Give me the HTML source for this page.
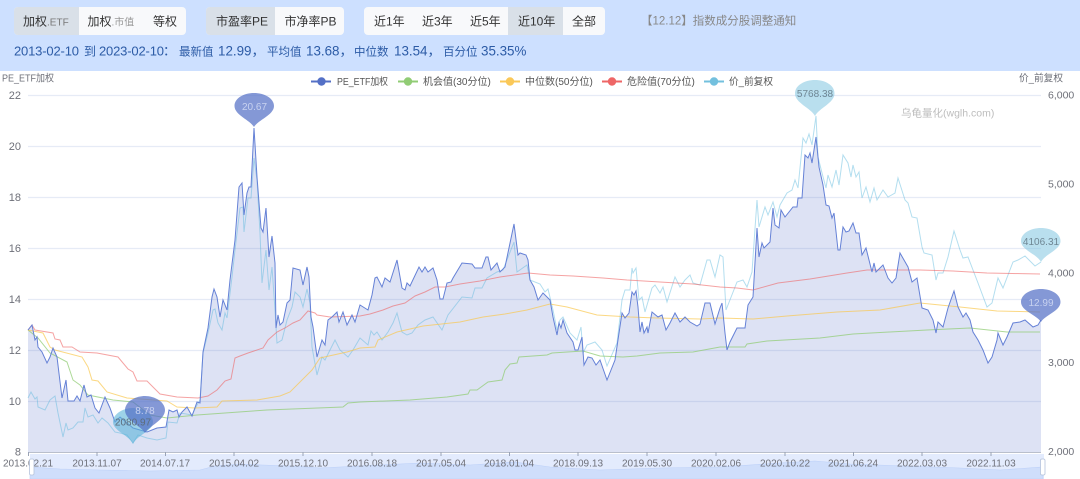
<!DOCTYPE html>
<html><head><meta charset="utf-8">
<style>
html,body{margin:0;padding:0;width:1080px;height:479px;overflow:hidden;background:#fff}
svg{display:block;filter:blur(.35px)}
text{font-family:"Liberation Sans","Noto Sans CJK SC",sans-serif}
</style></head><body>
<svg width="1080" height="479" viewBox="0 0 1080 479" xmlns="http://www.w3.org/2000/svg">
<rect x="0" y="0" width="1080" height="71" fill="#cde0ff"/>
<!-- button groups -->
<rect x="14" y="7" width="172" height="28" rx="4" fill="#f8f9fb"/>
<path d="M18 7H79V35H18a4 4 0 0 1-4-4V11a4 4 0 0 1 4-4z" fill="#d9e0e8"/>
<text x="23" y="25.500" font-size="12" fill="#333">加权<tspan font-size="10" fill="#777">.ETF</tspan></text>
<text x="87.500" y="25.500" font-size="12" fill="#333">加权<tspan font-size="10" fill="#999">.市值</tspan></text>
<text x="153" y="25.500" font-size="12" fill="#333">等权</text>
<rect x="206" y="7" width="138" height="28" rx="4" fill="#f8f9fb"/>
<path d="M210 7H275V35H210a4 4 0 0 1-4-4V11a4 4 0 0 1 4-4z" fill="#d9e0e8"/>
<text x="216" y="25.500" font-size="12" fill="#333">市盈率PE</text>
<text x="284.500" y="25.500" font-size="12" fill="#333">市净率PB</text>
<rect x="364" y="7" width="241" height="28" rx="4" fill="#f8f9fb"/>
<rect x="508" y="7" width="55" height="28" fill="#d9e0e8"/>
<text x="374" y="25.500" font-size="12" fill="#333">近1年</text>
<text x="422" y="25.500" font-size="12" fill="#333">近3年</text>
<text x="470" y="25.500" font-size="12" fill="#333">近5年</text>
<text x="518" y="25.500" font-size="12" fill="#333">近10年</text>
<text x="572" y="25.500" font-size="12" fill="#333">全部</text>
<text x="641" y="24.500" font-size="11.500" fill="#888">【12.12】指数成分股调整通知</text>
<g fill="#2c5ba6">
<text x="14" y="55.500" font-size="13" textLength="65">2013-02-10</text>
<text x="84" y="55.500" font-size="12">到</text>
<text x="99" y="55.500" font-size="13" textLength="65">2023-02-10</text>
<text x="163" y="55.500" font-size="13">：</text>
<text x="179" y="55.500" font-size="11.500">最新值</text><text x="218" y="55.500" font-size="13.400">12.99，</text>
<text x="267" y="55.500" font-size="11.500">平均值</text><text x="306" y="55.500" font-size="13.400">13.68，</text>
<text x="354" y="55.500" font-size="11.500">中位数</text><text x="394" y="55.500" font-size="13.400">13.54，</text>
<text x="443" y="55.500" font-size="11.500">百分位</text><text x="481" y="55.500" font-size="13.400">35.35%</text>
</g>
<!-- grid -->
<g stroke="#e6ebf6" stroke-width="1.3" fill="none">
<path d="M28 95.500H1041M28 146.500H1041M28 197.500H1041M28 248.500H1041M28 299.500H1041M28 350.500H1041M28 401.500H1041"/>
</g>
<!-- slider -->
<rect x="30" y="454" width="1014" height="25" fill="#e3ebfd"/>
<path d="M30 467L60 469 100 470 150 471 200 470 215 466 240 464 262 465 290 466 320 468 360 466 420 463 470 465 515 462 550 467 600 470 660 468 720 467 780 463 815 461 850 464 905 466 960 468 1000 470 1043 467V479H30Z" fill="#cfdefb" stroke="#bcd0f8" stroke-width=".6"/>
<!-- area + lines -->
<path fill="#5470c6" fill-opacity=".2" d="M28 452V330L32 325 35 340 37 337 38 347 42 352 47 363 50 357 53 348 57 357 62 398 66 380 68 401 74 401 77 396 80 401 84 385 87 397 91 395 95 408 99 413 105 397 110 408 115 422 120 417 133 428 147 432 157 428 166 427 169 410 173 412 177 410 179 417 182 412 187 407 192 416 197 402 200 403 203 352 208 328 212 297 214 289 217 297 220 317 223 300 227 310 230 280 235 240 239 187 242 183 244 215 247 193 249 187 251 187 254 128 257 177 261 228 263 232 266 208 269 257 272 236 275 263 276 328 278 315 280 325 283 322 287 303 290 300 293 268 300 270 303 285 307 267 309 277 311 317 313 327 317 357 322 340 325 345 328 320 332 317 337 312 339 322 343 312 347 325 352 315 355 322 360 305 368 310 372 295 375 278 377 277 382 287 385 278 390 282 397 260 402 288 405 290 407 283 410 286 419 267 422 272 425 267 428 272 433 268 437 280 440 299 443 299 447 283 451 282 453 278 462 263 472 264 475 268 482 268 486 257 488 257 491 270 497 263 500 272 505 267 514 224 518 255 520 253 526 255 528 260 530 280 534 287 538 300 543 293 550 300 553 317 557 335 559 323 561 328 563 320 567 333 573 342 575 350 578 350 582 337 584 365 588 357 592 358 596 365 600 360 607 380 615 360 619 333 622 313 625 318 629 313 632 292 634 295 636 291 638 307 640 332 642 322 644 333 647 327 648 333 652 312 658 317 662 315 666 330 670 323 675 313 680 322 685 317 690 322 697 326 700 324 705 303 710 303 715 324 720 308 722 303 725 333 727 350 730 342 737 328 745 328 748 305 753 297 757 228 759 257 762 243 764 248 770 242 773 208 775 225 779 228 781 210 785 217 793 207 797 207 798 198 802 198 805 155 808 158 810 153 812 163 816 137 819 167 823 185 826 205 829 206 832 218 834 213 838 250 840 250 843 227 846 232 849 231 853 223 856 233 859 233 862 255 866 248 872 272 874 263 876 272 883 265 888 278 892 283 896 278 900 253 908 267 912 282 917 278 922 308 928 310 933 320 936 333 938 322 943 327 948 308 954 291 958 307 963 317 966 313 970 320 973 332 978 340 983 350 988 363 992 357 997 340 998 333 1003 345 1007 337 1013 323 1020 322 1025 320 1033 327 1038 325 1041 320V452Z"/>
<path fill="none" stroke="#57b6dc" stroke-opacity=".45" stroke-width="1" d="M28 398L31 392 35 399 37 397 38 407 45 410 50 400 55 396 58 413 63 437 66 423 68 430 73 428 78 422 83 422 85 408 88 417 93 415 98 423 102 418 108 423 115 432 120 433 127 435 133 443 138 435 147 438 157 440 166 438 168 422 177 423 180 413 192 415 197 405 200 400 203 353 208 333 213 310 215 309 218 323 222 330 225 313 227 318 232 277 235 250 240 208 243 207 244 232 248 198 251 198 254 158 257 180 260 233 262 283 266 250 269 290 272 267 275 310 277 343 282 340 287 320 292 307 295 292 300 297 303 307 307 289 310 303 312 347 317 375 322 357 325 360 335 340 340 350 348 357 353 350 360 338 368 345 371 331 374 335 377 332 382 340 388 332 393 323 397 313 402 332 407 335 412 333 418 325 425 320 433 317 442 330 448 315 462 297 472 298 475 288 482 288 487 278 497 272 503 270 514 242 517 272 527 265 530 280 540 284 545 292 548 289 553 310 557 330 560 320 563 317 570 333 577 340 581 327 583 353 587 345 595 342 602 350 607 366 617 343 622 300 625 290 630 290 632 268 633 273 636 268 639 300 642 297 645 312 652 288 655 285 660 293 663 287 667 302 675 277 680 287 685 280 690 275 693 283 700 285 707 260 710 260 715 277 720 255 723 257 726 310 737 282 743 280 747 287 752 272 757 200 759 227 765 207 768 215 773 202 777 217 780 205 787 193 792 190 795 180 798 188 803 138 806 143 809 134 812 145 816 116 818 157 822 173 826 188 828 175 832 187 836 170 839 185 843 155 848 163 851 177 853 165 856 177 859 172 862 198 866 187 870 202 874 188 877 200 883 190 888 197 895 193 898 178 905 200 908 203 912 217 917 218 922 247 924 253 932 255 936 280 938 273 943 273 948 257 954 231 960 250 963 258 968 257 973 270 978 283 987 307 992 303 998 278 1003 288 1013 262 1018 260 1025 256 1035 266 1041 262"/>
<path fill="none" stroke="#91cc75" stroke-opacity=".75" stroke-width="1" d="M28 330L38 338 50 353 67 362 73 380 80 385 88 395 113 400 133 402 150 415 167 418 197 415 267 410 343 407 348 403 360 402 410 400 447 397 468 394 470 390 477 390 488 382 502 380 505 370 510 364 517 363 519 357 547 355 552 353 583 351 600 356 623 357 637 356 660 353 693 352 720 347 745 347 747 344 767 341 820 338 853 334 927 330 970 328 1007 332 1040 332"/>
<path fill="none" stroke="#f9c74f" stroke-opacity=".7" stroke-width="1" d="M28 330L43 333 50 347 55 350 82 357 88 367 92 380 98 381 107 392 127 398 167 401 177 407 195 408 217 407 222 401 257 400 280 396 290 392 302 380 312 370 320 358 347 352 360 348 375 347 378 340 397 332 423 326 460 322 483 317 505 314 527 310 550 304 567 307 597 315 630 317 657 318 700 319 720 318 753 319 787 316 837 312 880 310 920 303 960 307 997 311 1040 312"/>
<path fill="none" stroke="#ee6666" stroke-opacity=".6" stroke-width="1" d="M28 330L32 325 35 330 53 333 55 339 60 340 63 347 72 347 80 352 97 353 118 357 128 369 133 372 137 381 147 381 160 394 177 397 198 398 208 396 217 390 225 381 231 379 235 358 240 356 248 353 263 348 268 340 277 332 285 328 293 323 300 320 308 311 315 313 317 315 330 317 360 316 370 314 383 310 393 306 405 303 415 296 425 292 435 287 445 287 460 284 480 281 500 277 528 273 550 275 573 276 603 278 627 280 660 282 693 284 720 287 737 288 753 290 778 283 810 279 847 273 867 270 920 270 953 271 987 273 1040 274"/>
<path fill="none" stroke="#6581d6" stroke-width="1" d="M28 330L32 325 35 340 37 337 38 347 42 352 47 363 50 357 53 348 57 357 62 398 66 380 68 401 74 401 77 396 80 401 84 385 87 397 91 395 95 408 99 413 105 397 110 408 115 422 120 417 133 428 147 432 157 428 166 427 169 410 173 412 177 410 179 417 182 412 187 407 192 416 197 402 200 403 203 352 208 328 212 297 214 289 217 297 220 317 223 300 227 310 230 280 235 240 239 187 242 183 244 215 247 193 249 187 251 187 254 128 257 177 261 228 263 232 266 208 269 257 272 236 275 263 276 328 278 315 280 325 283 322 287 303 290 300 293 268 300 270 303 285 307 267 309 277 311 317 313 327 317 357 322 340 325 345 328 320 332 317 337 312 339 322 343 312 347 325 352 315 355 322 360 305 368 310 372 295 375 278 377 277 382 287 385 278 390 282 397 260 402 288 405 290 407 283 410 286 419 267 422 272 425 267 428 272 433 268 437 280 440 299 443 299 447 283 451 282 453 278 462 263 472 264 475 268 482 268 486 257 488 257 491 270 497 263 500 272 505 267 514 224 518 255 520 253 526 255 528 260 530 280 534 287 538 300 543 293 550 300 553 317 557 335 559 323 561 328 563 320 567 333 573 342 575 350 578 350 582 337 584 365 588 357 592 358 596 365 600 360 607 380 615 360 619 333 622 313 625 318 629 313 632 292 634 295 636 291 638 307 640 332 642 322 644 333 647 327 648 333 652 312 658 317 662 315 666 330 670 323 675 313 680 322 685 317 690 322 697 326 700 324 705 303 710 303 715 324 720 308 722 303 725 333 727 350 730 342 737 328 745 328 748 305 753 297 757 228 759 257 762 243 764 248 770 242 773 208 775 225 779 228 781 210 785 217 793 207 797 207 798 198 802 198 805 155 808 158 810 153 812 163 816 137 819 167 823 185 826 205 829 206 832 218 834 213 838 250 840 250 843 227 846 232 849 231 853 223 856 233 859 233 862 255 866 248 872 272 874 263 876 272 883 265 888 278 892 283 896 278 900 253 908 267 912 282 917 278 922 308 928 310 933 320 936 333 938 322 943 327 948 308 954 291 958 307 963 317 966 313 970 320 973 332 978 340 983 350 988 363 992 357 997 340 998 333 1003 345 1007 337 1013 323 1020 322 1025 320 1033 327 1038 325 1041 320"/>
<!-- axis -->
<path d="M28 452.500H1041" stroke="#b9bfcc" stroke-width="1"/>
<path d="M28.500 452v4M97 452v4M165.500 452v4M234 452v4M303 452v4M372 452v4M441 452v4M509.500 452v4M578 452v4M647 452v4M716 452v4M785 452v4M853.500 452v4M922 452v4M991 452v4" stroke="#9aa3b5" stroke-width="1"/>
<g font-size="11" fill="#6e7079" text-anchor="end">
<text x="21" y="99">22</text><text x="21" y="150">20</text><text x="21" y="201">18</text><text x="21" y="252">16</text><text x="21" y="303">14</text><text x="21" y="354">12</text><text x="21" y="405">10</text><text x="21" y="455.500">8</text>
</g>
<g font-size="10.500" fill="#6e7079" text-anchor="start">
<text x="1048" y="98.500">6,000</text><text x="1048" y="187.500">5,000</text><text x="1048" y="276.500">4,000</text><text x="1048" y="366">3,000</text><text x="1048" y="455">2,000</text>
</g>
<g font-size="10" fill="#6e7079">
<text x="2" y="81.500" textLength="52" lengthAdjust="spacingAndGlyphs">PE_ETF加权</text>
<text x="1019" y="81.500" textLength="44" lengthAdjust="spacingAndGlyphs">价_前复权</text>
</g>
<g font-size="10" fill="#6e7079" text-anchor="middle">
<text x="28" y="466.500">2013.02.21</text><text x="97" y="466.500">2013.11.07</text><text x="165" y="466.500">2014.07.17</text><text x="234" y="466.500">2015.04.02</text><text x="303" y="466.500">2015.12.10</text><text x="372" y="466.500">2016.08.18</text><text x="441" y="466.500">2017.05.04</text><text x="509" y="466.500">2018.01.04</text><text x="578" y="466.500">2018.09.13</text><text x="647" y="466.500">2019.05.30</text><text x="716" y="466.500">2020.02.06</text><text x="785" y="466.500">2020.10.22</text><text x="853" y="466.500">2021.06.24</text><text x="922" y="466.500">2022.03.03</text><text x="991" y="466.500">2022.11.03</text>
</g>
<!-- handles -->
<rect x="29.500" y="459" width="4.500" height="16" rx="1.500" fill="#fff" stroke="#b5c3dc" stroke-width=".8"/>
<rect x="1040.500" y="459" width="4.500" height="16" rx="1.500" fill="#fff" stroke="#b5c3dc" stroke-width=".8"/>
<!-- legend -->
<g stroke-width="2">
<path d="M311 81.500H331" stroke="#5470c6"/><circle cx="321.500" cy="81.500" r="4.200" fill="#5470c6"/>
<path d="M398 81.500H418" stroke="#91cc75"/><circle cx="408" cy="81.500" r="4.200" fill="#91cc75"/>
<path d="M500 81.500H520" stroke="#fac858"/><circle cx="510" cy="81.500" r="4.200" fill="#fac858"/>
<path d="M602 81.500H622" stroke="#ee6666"/><circle cx="612" cy="81.500" r="4.200" fill="#ee6666"/>
<path d="M704 81.500H724" stroke="#73c0de"/><circle cx="714" cy="81.500" r="4.200" fill="#73c0de"/>
</g>
<g font-size="10" fill="#555">
<text x="337" y="85" textLength="51" lengthAdjust="spacingAndGlyphs">PE_ETF加权</text>
<text x="423" y="85">机会值(30分位)</text>
<text x="525" y="85">中位数(50分位)</text>
<text x="627" y="85">危险值(70分位)</text>
<text x="729" y="85" textLength="44" lengthAdjust="spacingAndGlyphs">价_前复权</text>
</g>
<text x="901" y="116.500" font-size="10.500" fill="#bdbdbd">乌龟量化(wglh.com)</text>
<!-- pins -->
<path fill="#5470c6" fill-opacity=".72" d="M254 127C250 120 234.500 115 234.500 106C234.500 98 244 93 254 93C264 93 274 98 274 106C274 115 258 120 254 127Z"/>
<text x="254.500" y="110" font-size="10" text-anchor="middle" fill="#c8d2f0">20.67</text>
<path fill="#73c0de" fill-opacity=".5" d="M815 116C811 108 795 103 795 93.500C795 85 805 80 815 80C825 80 834.500 85 834.500 93.500C834.500 103 819 108 815 116Z"/>
<text x="815" y="97" font-size="10" text-anchor="middle" fill="#6f8794">5768.38</text>
<path fill="#73c0de" fill-opacity=".5" d="M1041 262C1037 254 1021 250 1021 241C1021 233 1031 228 1041 228C1051 228 1060.500 233 1060.500 241C1060.500 250 1045 254 1041 262Z"/>
<text x="1041" y="245" font-size="10" text-anchor="middle" fill="#6f8794">4106.31</text>
<path fill="#5470c6" fill-opacity=".72" d="M1041 322C1037 315 1021 311 1021 302C1021 294 1031 289 1041 289C1051 289 1060.500 294 1060.500 302C1060.500 311 1045 315 1041 322Z"/>
<text x="1041" y="306" font-size="10" text-anchor="middle" fill="#c8d2f0">12.99</text>
<path fill="#5cb4d8" fill-opacity=".6" d="M133 444C129 435 113 431 113 422C113 414 123 408 133 408C143 408 153 414 153 422C153 431 137 435 133 444Z"/>
<path fill="#5470c6" fill-opacity=".72" d="M145 433C141 426 125 420 125 410C125 402 135 396 145 396C155 396 165 402 165 410C165 420 149 426 145 433Z"/>
<text x="133" y="425.500" font-size="10" text-anchor="middle" fill="#5d6d7c">2080.97</text>
<text x="145" y="414" font-size="10" text-anchor="middle" fill="#c8d2f0">8.78</text>
</svg>
</body></html>
